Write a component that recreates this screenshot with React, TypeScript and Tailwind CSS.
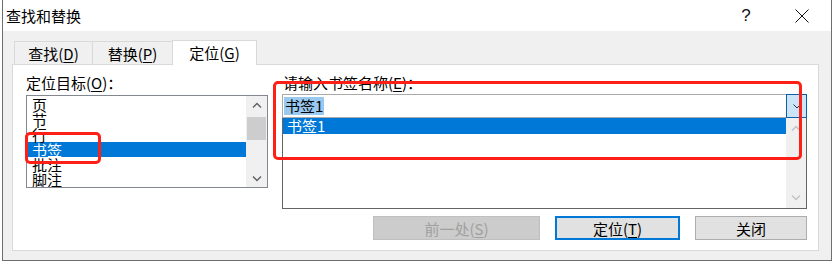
import type { ReactNode } from 'react';

function Chevron({ dir, className = '' }: { dir: 'up' | 'down'; className?: string }) {
  return (
    <svg width="10" height="6" viewBox="0 0 10 6" fill="none" stroke="currentColor" strokeWidth="1.4" className={className}>
      <path d={dir === 'up' ? 'M1 5.5 5 1.5 9 5.5' : 'M1 0.5 5 4.5 9 0.5'} />
    </svg>
  );
}

function Hot({ children }: { children: ReactNode }) {
  return <u className="underline-offset-2">{children}</u>;
}

const targets = ['页', '节', '行', '书签', '批注', '脚注'];

export default function App() {
  return (
    <div className="relative h-[263px] w-[833px] bg-white font-['Noto_Sans_CJK_SC',sans-serif] text-[15px] text-black">
      <div className="ml-[2px] flex h-[261px] w-[830px] flex-col border-x border-b border-[#6e6e6e] bg-[#f0f0f0]">
        {/* Title bar */}
        <div className="flex h-[31px] shrink-0 items-center bg-white pl-[3px]">
          <span className="leading-none">查找和替换</span>
          <span className="ml-auto flex h-full w-[46px] items-center justify-center font-['Liberation_Sans',sans-serif] text-[17px] text-[#111]">?</span>
          <span className="ml-[9px] mr-[6px] flex h-full w-[47px] items-center justify-center">
            <svg width="14" height="14" viewBox="0 0 14 14" stroke="#111" strokeWidth="1">
              <path d="M0.5 0.5 13.5 13.5M13.5 0.5 0.5 13.5" />
            </svg>
          </span>
        </div>

        <div className="flex flex-1 flex-col pl-[9px] pr-[12px]">
          {/* Tabs */}
          <div className="mt-[9px] flex h-[24px] items-end pl-[2px]">
            <div className="flex h-[23px] w-[79px] items-center justify-center border-x border-t border-[#d9d9d9] leading-none">
              查找(<Hot>D</Hot>)
            </div>
            <div className="flex h-[23px] w-[80px] items-center justify-center border-r border-t border-[#d9d9d9] leading-none">
              替换(<Hot>P</Hot>)
            </div>
            <div className="relative z-10 -mb-px -ml-px flex h-[25px] w-[85px] items-center justify-center border-x border-t border-[#d9d9d9] bg-white pb-[2px] leading-none">
              定位(<Hot>G</Hot>)
            </div>
          </div>

          {/* Panel */}
          <div className="flex h-[187px] flex-col border border-[#d9d9d9] bg-white pb-[10px] pl-[13px] pr-[11px] pt-[8px]">
            <div className="flex gap-[14px]">
              {/* Left column */}
              <div className="w-[242px]">
                <div className="mb-[2px] h-[20px] leading-[20px]">
                  定位目标(<Hot>O</Hot>)：
                </div>
                <div className="flex h-[93px] border border-[#828790]">
                  <div className="flex-1 overflow-hidden pt-px">
                    {targets.map((t) => (
                      <div
                        key={t}
                        className={`h-[15px] pl-[5px] text-[15px] leading-[15px] ${t === '书签' ? 'bg-[#0078d7] text-white' : ''}`}
                      >
                        {t}
                      </div>
                    ))}
                  </div>
                  <div className="flex w-[21px] flex-col bg-[#f0f0f0]">
                    <div className="flex h-[17px] items-center justify-center text-[#606060]">
                      <Chevron dir="up" />
                    </div>
                    <div className="mx-px mt-[4px] h-[23px] bg-[#cdcdcd]" />
                    <div className="flex-1" />
                    <div className="flex h-[17px] items-center justify-center text-[#606060]">
                      <Chevron dir="down" />
                    </div>
                  </div>
                </div>
              </div>

              {/* Right column */}
              <div className="w-[525px]">
                <div className="mb-px h-[20px] pl-px leading-[20px]">
                  请输入书签名称(<Hot>E</Hot>)：
                </div>
                <div className="flex h-[24px] border border-[#a9a9a9]">
                  <div className="flex flex-1 items-center pl-px">
                    <span className="bg-[#99c9ef] px-px text-[15px] leading-[18px]">书签1</span>
                  </div>
                  <div className="-mb-px -mr-px -mt-px flex w-[21px] items-center justify-center border border-[#0b5ea8] bg-[#cce4f7] text-[#333]">
                    <svg width="8" height="5" viewBox="0 0 8 5" fill="none" stroke="currentColor" strokeWidth="1">
                      <path d="M0.5 0.5 4 4 7.5 0.5" />
                    </svg>
                  </div>
                </div>
                <div className="flex h-[91px] border-x border-b border-[#646464]">
                  <div className="flex-1">
                    <div className="h-[16px] bg-[#0078d7] pl-[4px] text-[15px] leading-[16px] text-white">书签1</div>
                  </div>
                  <div className="flex w-[20px] flex-col justify-between bg-[#f0f0f0] text-[#c3c3c3]">
                    <div className="flex h-[20px] items-center justify-center">
                      <Chevron dir="up" />
                    </div>
                    <div className="flex h-[20px] items-center justify-center">
                      <Chevron dir="down" />
                    </div>
                  </div>
                </div>
              </div>
            </div>

            {/* Buttons */}
            <div className="mt-auto flex justify-end gap-[15px]">
              <button className="h-[24px] w-[167px] border border-[#bfbfbf] bg-[#cccccc] text-[15px] leading-none text-[#a0a0a0]">
                前一处(<Hot>S</Hot>)
              </button>
              <button className="h-[24px] w-[125px] border-2 border-[#0078d7] bg-[#e1e1e1] text-[15px] leading-none">
                定位(<Hot>T</Hot>)
              </button>
              <button className="h-[24px] w-[112px] border border-[#adadad] bg-[#e1e1e1] text-[15px] leading-none">
                关闭
              </button>
            </div>
          </div>
        </div>
      </div>

      {/* Red annotation boxes */}
      <div className="absolute left-[25px] top-[132px] h-[32px] w-[76px] rounded-[5px] border-[3px] border-[#fe2017]" />
      <div className="absolute left-[273px] top-[81px] h-[79px] w-[529px] rounded-[5px] border-[3px] border-[#fe2017]" />
    </div>
  );
}
